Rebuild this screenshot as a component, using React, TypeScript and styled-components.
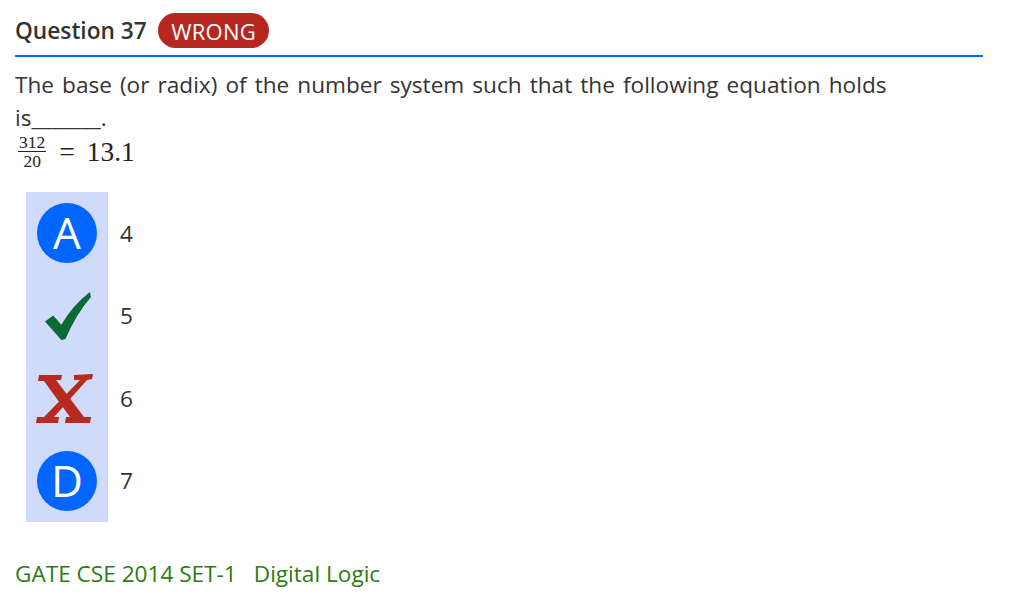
import React from 'react';
import styled, { createGlobalStyle } from 'styled-components';

const GlobalStyle = createGlobalStyle`
  body {
    margin: 0;
    background: #fff;
    font-family: 'Open Sans', 'Noto Sans', sans-serif;
    color: #333;
  }
`;

const Page = styled.div`
  width: 968px;
  padding: 0 26px 0 15px;
`;

const Header = styled.div`
  display: flex;
  align-items: center;
  height: 57px;
  padding-top: 6px;
  box-sizing: border-box;
  border-bottom: 2px solid #0a66f5;
`;

const Title = styled.h2`
  margin: 0;
  font-size: 22.7px;
  font-weight: 600;
  color: #333;
`;

const Badge = styled.span`
  display: inline-flex;
  align-items: center;
  height: 35px;
  margin-left: 11px;
  padding: 0 13.5px;
  border-radius: 18px;
  background: #b5271f;
  color: #fff;
  font-size: 22px;
  font-weight: 500;
  letter-spacing: 0.2px;
`;

const Prompt = styled.p`
  margin: 10.5px 0 0;
  font-size: 22.6px;
  line-height: 33px;
  word-spacing: 2.2px;
  color: #333;
`;

const MathLine = styled.div`
  display: flex;
  align-items: center;
  height: 36px;
  margin-left: 3px;
  color: #222;
`;

const Fraction = styled.span`
  display: inline-flex;
  flex-direction: column;
  align-items: center;
  font-family: 'Liberation Serif', serif;
  font-size: 17.5px;
  line-height: 16px;
`;

const Numer = styled.span`
  padding: 0 1px 1px;
  border-bottom: 1px solid #222;
`;

const Denom = styled.span`
  padding-top: 1px;
`;

const MathRest = styled.span`
  margin-left: 13px;
  font-family: 'Liberation Serif', serif;
  font-size: 27.5px;
  word-spacing: 5px;
`;

const Options = styled.div`
  margin: 22.5px 0 0 11px;
  display: flex;
  flex-direction: column;
`;

const OptionRow = styled.div`
  display: flex;
  align-items: center;
  height: 82.5px;
`;

const Marker = styled.div`
  width: 82px;
  height: 100%;
  display: flex;
  align-items: center;
  justify-content: center;
  background: #d0dafa;
`;

const Circle = styled.div`
  width: 60px;
  height: 60px;
  border-radius: 50%;
  background: #0066ff;
  color: #fff;
  display: flex;
  align-items: center;
  justify-content: center;
  font-size: 44px;
  line-height: 1;
  padding-bottom: 2px;
  box-sizing: border-box;
`;

const OptionText = styled.span`
  margin-left: 12px;
  font-size: 22.6px;
  color: #333;
`;

const Tags = styled.div`
  display: flex;
  gap: 17px;
  margin-top: 35px;
  font-size: 22.6px;
  line-height: 33px;
  color: #2e7a14;
`;

const Check = () => (
  <svg width="47" height="49" viewBox="0 0 46 48" style={{ marginLeft: 2, marginTop: 2 }}>
    <path d="M0 29 L8 23 L16 32 Q27 13 44 0 L45 5 Q31 21 20 46 L16 47 Z" fill="#0a6a32" />
  </svg>
);

const Cross = () => (
  <svg width="58" height="50" viewBox="0 0 58 50" style={{ marginLeft: -4, marginTop: 2 }}>
    <g fill="#b8291e">
      <path d="M3 1 L26 1 L25 6 L20 6 L48 43 L55 43 L54 49 L29 49 L30 43 L34 43 L8 7 L2 7 Z" />
      <path d="M38 1 L57 0 L56 5 L51 6 L18 43 L23 43 L22 49 L0 49 L1 43 L8 43 L44 6 L38 6 Z" />
    </g>
  </svg>
);

const options = [
  { mark: 'A', text: '4' },
  { mark: 'check', text: '5' },
  { mark: 'cross', text: '6' },
  { mark: 'D', text: '7' },
];

export default function App() {
  return (
    <>
      <GlobalStyle />
      <Page>
        <Header>
          <Title>Question 37</Title>
          <Badge>WRONG</Badge>
        </Header>
        <Prompt>
          The base (or radix) of the number system such that the following equation holds
          is_______.
        </Prompt>
        <MathLine>
          <Fraction>
            <Numer>312</Numer>
            <Denom>20</Denom>
          </Fraction>
          <MathRest>= 13.1</MathRest>
        </MathLine>
        <Options>
          {options.map((o) => (
            <OptionRow key={o.text}>
              <Marker>
                {o.mark === 'check' ? <Check /> : o.mark === 'cross' ? <Cross /> : <Circle>{o.mark}</Circle>}
              </Marker>
              <OptionText>{o.text}</OptionText>
            </OptionRow>
          ))}
        </Options>
        <Tags>
          <span>GATE CSE 2014 SET-1</span>
          <span>Digital Logic</span>
        </Tags>
      </Page>
    </>
  );
}
